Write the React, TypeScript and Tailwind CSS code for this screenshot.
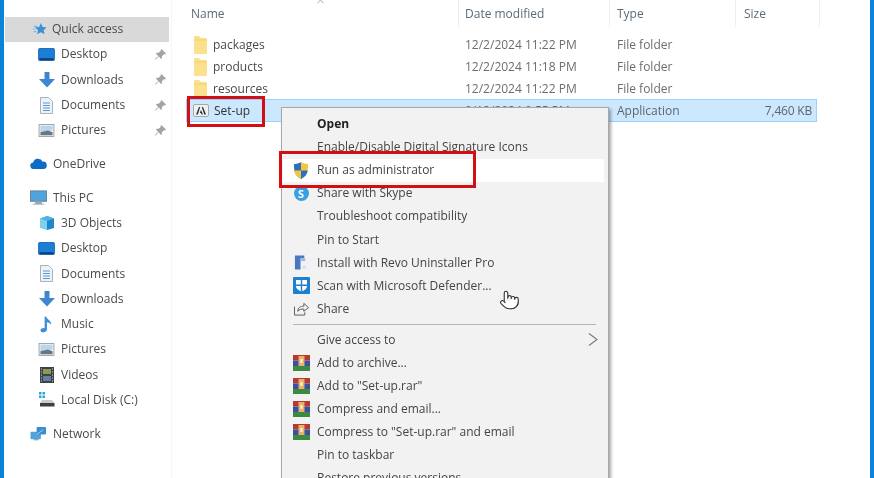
import { ChevronUp, Pointer } from 'lucide-react';
import type { ReactNode } from 'react';

function StarIcon() {
  return (
    <svg viewBox="0 0 16 16" className="w-[14px] h-[14px]">
      <path d="M9 1l2 4.600 4.600.5-3.400 3.200 1 4.700L9 11.600 4.800 14l1-4.700L2.400 6.100 7 5.600z" fill="#3f8fd8" />
      <path d="M1 5h4M0 8h3M1 11h3" stroke="#7ab6e8" strokeWidth="1.200" />
    </svg>
  );
}

function DesktopIcon() {
  return (
    <svg viewBox="0 0 18 14" className="w-[17px] h-[13px]">
      <rect x="0.500" y="0.500" width="17" height="13" rx="1" fill="#1b7fd8" stroke="#1565b0" />
      <rect x="1.500" y="11" width="15" height="2" fill="#0d3f78" />
    </svg>
  );
}

function DownloadIcon() {
  return (
    <svg viewBox="0 0 16 16" className="w-[16px] h-[16px]">
      <path d="M5.500 0h5v7H16l-8 8.500L0 7h5.500z" fill="#3c87cf" />
    </svg>
  );
}

function DocumentIcon() {
  return (
    <svg viewBox="0 0 13 17" className="w-[13px] h-[17px]">
      <path d="M.5.500h8l4 4v12H.5z" fill="#eef3f8" stroke="#a9b3bd" />
      <path d="M3 6h7M3 8.500h7M3 11h7M3 13.500h7" stroke="#5d9bd2" />
    </svg>
  );
}

function PicturesIcon() {
  return (
    <svg viewBox="0 0 17 14" className="w-[17px] h-[13px]">
      <rect x="0.500" y="0.500" width="16" height="13" fill="#eef1f4" stroke="#9aa3ab" />
      <path d="M2 2h13v5L2 9z" fill="#b9d6ee" />
      <path d="M2 9l8-2 5 2v3H2z" fill="#6b7780" />
    </svg>
  );
}

function CloudIcon() {
  return (
    <svg viewBox="0 0 18 12" className="w-[17px] h-[11px]">
      <path d="M4 12a3.500 3.500 0 0 1-.8-7A5.500 5.500 0 0 1 13.500 4 4 4 0 0 1 14.500 12z" fill="#0f6cc4" />
    </svg>
  );
}

function MonitorIcon() {
  return (
    <svg viewBox="0 0 18 16" className="w-[17px] h-[16px]">
      <rect x="0.500" y="0.500" width="17" height="11" fill="#4fa3de" stroke="#6d8293" />
      <path d="M6 12h6v2H6zM3 14.500h12" fill="#9aa6ae" stroke="#9aa6ae" />
    </svg>
  );
}

function CubeIcon() {
  return (
    <svg viewBox="0 0 16 16" className="w-[16px] h-[16px]">
      <path d="M8 1l7 2.500v9.500L8 15z" fill="#1f87c9" />
      <path d="M8 1L1 3.500v9.500L8 15z" fill="#7fd0ee" />
      <path d="M1 3.500L8 1l7 2.500L8 6z" fill="#4db3e3" />
    </svg>
  );
}

function MusicIcon() {
  return (
    <svg viewBox="0 0 14 17" className="w-[13px] h-[17px]">
      <path d="M5 0h1.500c.5 3 6 4 5.500 9-1-2-3-3-4.500-3v8c0 2-2 3-4 3s-3-1-3-2.200C.5 13 3 12 5 12.500z" fill="#3c8fd8" />
    </svg>
  );
}

function VideosIcon() {
  return (
    <svg viewBox="0 0 14 16" className="w-[14px] h-[16px]">
      <rect width="14" height="16" fill="#3d4248" />
      <rect x="3" y="2" width="8" height="5" fill="#8c9a52" />
      <rect x="3" y="9" width="8" height="5" fill="#62809c" />
      <path d="M1 2h1M1 5h1M1 8h1M1 11h1M1 14h1M12 2h1M12 5h1M12 8h1M12 11h1M12 14h1" stroke="#d0d4d8" />
    </svg>
  );
}

function DiskIcon() {
  return (
    <svg viewBox="0 0 16 15" className="w-[16px] h-[15px]">
      <rect x="0" y="0" width="2.500" height="2.500" fill="#29a5df" />
      <rect x="3.500" y="0" width="2.500" height="2.500" fill="#29a5df" />
      <rect x="0" y="3.500" width="2.500" height="2.500" fill="#29a5df" />
      <rect x="3.500" y="3.500" width="2.500" height="2.500" fill="#29a5df" />
      <path d="M3 8h10l2.500 3H1z" fill="#c8ccd0" />
      <rect x="1" y="11" width="14.500" height="3.500" fill="#3c4045" />
    </svg>
  );
}

function NetworkIcon() {
  return (
    <svg viewBox="0 0 18 17" className="w-[17px] h-[16px]">
      <rect x="0.500" y="6" width="11" height="8" rx="1" fill="#4fa3de" />
      <path d="M4 14.500h5" stroke="#9aa6ae" strokeWidth="1.500" />
      <rect x="7" y="1" width="10" height="8" rx="1" fill="#3d8ccf" />
      <path d="M7 9l7-5" stroke="#a9d4f0" />
    </svg>
  );
}

function PinIcon() {
  return (
    <svg viewBox="0 0 12 12" className="w-[11px] h-[11px]">
      <path d="M7 0l5 5-1 1-1-.5L7.500 8 7.500 10 6.500 11 4 8 .8 11.500 0 11l3.500-3.500L1 5l1-1 2 0 2.500-2.500L6 1z" fill="#a3a3a3" />
    </svg>
  );
}

function FolderIcon() {
  return (
    <svg viewBox="0 0 13 18" className="w-[13px] h-[18px] shrink-0">
      <path d="M1 0h4l2 2h5a1 1 0 0 1 1 1v14a1 1 0 0 1-1 1H1a1 1 0 0 1-1-1V1a1 1 0 0 1 1-1z" fill="#fbe08e" />
      <path d="M0 4h13" stroke="#f6cf68" />
    </svg>
  );
}

function AdobeIcon() {
  return (
    <svg viewBox="0 0 16 13" className="w-[16px] h-[13px] shrink-0">
      <rect x="0.500" y="0.500" width="15" height="12" rx="1.500" fill="#eef0f2" stroke="#a5a8ab" />
      <path d="M3 10.500L6 3h1.200L4.800 10.500zM13 10.500L10 3H8.800l2.400 7.500zM8 6l2 4.500H8.600L8 9H6.800z" fill="#2c2c2c" />
    </svg>
  );
}

function ShieldIcon() {
  return (
    <svg viewBox="0 0 16 17" className="w-[16px] h-[17px]">
      <path d="M8 0C6 1.500 3 2 1 2c0 6 0 11 7 15z" fill="#2f6fb5" />
      <path d="M8 0c2 1.500 5 2 7 2 0 6 0 11-7 15z" fill="#f3c544" />
      <path d="M1.300 8.500H8V17C3.500 14.500 1.800 12 1.300 8.500z" fill="#f3c544" />
      <path d="M14.700 8.500H8V17c4.500-2.500 6.200-5 6.700-8.500z" fill="#2f6fb5" />
    </svg>
  );
}

function SkypeIcon() {
  return (
    <div className="w-[15px] h-[15px] rounded-full bg-[#3aa0e4] flex items-center justify-center text-white text-[11px] font-bold leading-none">
      S
    </div>
  );
}

function RevoIcon() {
  return (
    <svg viewBox="0 0 15 15" className="w-[14px] h-[15px]">
      <path d="M1 0h10v3H7v12H1z" fill="#4a78c0" />
      <path d="M7 3h5v3H7z" fill="#9db9e2" />
      <rect x="9" y="11" width="4" height="3" fill="#d5dfee" />
    </svg>
  );
}

function DefenderIcon() {
  return (
    <svg viewBox="0 0 17 17" className="w-[17px] h-[17px]">
      <rect width="17" height="17" rx="1" fill="#1f7fd0" />
      <path d="M3 3h11v6c0 3-3 4.500-5.500 5.500C6 13.500 3 12 3 9z" fill="#ffffff" />
      <path d="M7.800 3h1.400v11.500H7.800zM3 7.500h11v1.400H3z" fill="#1f7fd0" />
    </svg>
  );
}

function ShareIcon() {
  return (
    <svg viewBox="0 0 16 15" fill="none" stroke="#555555" strokeWidth="1" className="w-[15px] h-[14px]">
      <path d="M.5 5v9h11v-3" />
      <path d="M4 10c0-4 3-5.500 6.500-5.500V1.500L15.500 6l-5 4V7.500C8 7.500 5.500 8 4 10z" />
    </svg>
  );
}

function RarIcon() {
  return (
    <svg viewBox="0 0 17 16" className="w-[17px] h-[16px]">
      <rect width="17" height="5.500" fill="#b8392f" />
      <rect y="5.500" width="17" height="5.500" fill="#3d4fa5" />
      <rect y="11" width="17" height="5" fill="#3c8a3f" />
      <rect x="5.500" y="1" width="6" height="10" fill="#e8b26a" />
      <rect x="7.500" y="4" width="2" height="4" fill="#fff4dc" />
    </svg>
  );
}

function MenuArrow() {
  return (
    <svg viewBox="0 0 10 13" fill="none" stroke="#777777" strokeWidth="1.100" className="w-[10px] h-[13px] mr-[6px]">
      <path d="M1 .5L9 6.500 1 12.500" />
    </svg>
  );
}

type NavItem = { label: string; icon: ReactNode; pin?: boolean };

const quickAccess: NavItem[] = [
  { label: 'Desktop', icon: <DesktopIcon />, pin: true },
  { label: 'Downloads', icon: <DownloadIcon />, pin: true },
  { label: 'Documents', icon: <DocumentIcon />, pin: true },
  { label: 'Pictures', icon: <PicturesIcon />, pin: true },
];

const thisPc: NavItem[] = [
  { label: '3D Objects', icon: <CubeIcon /> },
  { label: 'Desktop', icon: <DesktopIcon /> },
  { label: 'Documents', icon: <DocumentIcon /> },
  { label: 'Downloads', icon: <DownloadIcon /> },
  { label: 'Music', icon: <MusicIcon /> },
  { label: 'Pictures', icon: <PicturesIcon /> },
  { label: 'Videos', icon: <VideosIcon /> },
  { label: 'Local Disk (C:)', icon: <DiskIcon /> },
];

function NavRow({ item }: { item: NavItem }) {
  return (
    <div className="h-[25.3px] flex items-center pl-[32px] pr-[5px]">
      <span className="w-[25px] flex justify-center pr-[5px] pl-[1px]">{item.icon}</span>
      <span className="flex-1">{item.label}</span>
      {item.pin && <PinIcon />}
    </div>
  );
}

function TopRow({ icon, label }: { icon: ReactNode; label: string }) {
  return (
    <div className="h-[25.3px] flex items-center pl-[26px]">
      <span className="w-[23px] flex justify-start">{icon}</span>
      <span>{label}</span>
    </div>
  );
}

const menuTop: { label: string; icon?: ReactNode; bold?: boolean; hot?: boolean }[] = [
  { label: 'Open', bold: true },
  { label: 'Enable/Disable Digital Signature Icons' },
  { label: 'Run as administrator', icon: <ShieldIcon />, hot: true },
  { label: 'Share with Skype', icon: <SkypeIcon /> },
  { label: 'Troubleshoot compatibility' },
  { label: 'Pin to Start' },
  { label: 'Install with Revo Uninstaller Pro', icon: <RevoIcon /> },
  { label: 'Scan with Microsoft Defender...', icon: <DefenderIcon /> },
  { label: 'Share', icon: <ShareIcon /> },
];

const menuBottom: { label: string; icon?: ReactNode; arrow?: boolean }[] = [
  { label: 'Give access to', arrow: true },
  { label: 'Add to archive...', icon: <RarIcon /> },
  { label: 'Add to "Set-up.rar"', icon: <RarIcon /> },
  { label: 'Compress and email...', icon: <RarIcon /> },
  { label: 'Compress to "Set-up.rar" and email', icon: <RarIcon /> },
  { label: 'Pin to taskbar' },
  { label: 'Restore previous versions' },
];

const folders = [
  { name: 'packages', date: '12/2/2024 11:22 PM' },
  { name: 'products', date: '12/2/2024 11:18 PM' },
  { name: 'resources', date: '12/2/2024 11:22 PM' },
];

export default function App() {
  return (
    <div className="relative w-[874px] h-[478px] overflow-hidden bg-white flex text-[12px] text-[#4a4a4a] font-['Open_Sans','Noto_Sans',sans-serif] blur-[0.4px]">
      <div className="w-[4px] bg-[#0a84d8] shrink-0" />

      {/* Nav pane */}
      <div className="w-[168px] shrink-0 pt-[17px] border-r border-[#f6f6f6]">
        <div className="h-[24.8px] bg-[#d9d9d9] flex items-center pl-[28px] ml-[1px] mr-[2px]">
          <span className="w-[19px]"><StarIcon /></span>
          <span>Quick access</span>
        </div>
        {quickAccess.map((item) => <NavRow key={item.label} item={item} />)}
        <div className="h-[8.2px]" />
        <TopRow icon={<CloudIcon />} label="OneDrive" />
        <div className="h-[8.5px]" />
        <TopRow icon={<MonitorIcon />} label="This PC" />
        {thisPc.map((item) => <NavRow key={item.label} item={item} />)}
        <div className="h-[8.5px]" />
        <TopRow icon={<NetworkIcon />} label="Network" />
      </div>

      {/* File list */}
      <div className="flex-1 relative pl-[14px]">
        <div className="h-[27px] flex items-center text-[#5c6b7a]">
          <div className="w-[273px] pl-[5px] h-full flex items-center border-r border-[#eeeeee] relative">
            Name
            <ChevronUp className="absolute left-[129px] top-[-4px] w-[11px] h-[11px] text-[#9a9a9a]" />
          </div>
          <div className="w-[151px] pl-[6px] h-full flex items-center border-r border-[#eeeeee]">Date modified</div>
          <div className="w-[126px] pl-[7px] h-full flex items-center border-r border-[#eeeeee]">Type</div>
          <div className="w-[84px] pl-[8px] h-full flex items-center border-r border-[#eeeeee]">Size</div>
        </div>
        <div className="pt-[6.5px]">
          {folders.map((f) => (
            <div key={f.name} className="h-[22px] flex items-center">
              <div className="w-[273px] flex items-center pl-[8px] gap-[6px]"><FolderIcon />{f.name}</div>
              <div className="w-[152px] pl-[6px] text-[#6d6d6d]">{f.date}</div>
              <div className="w-[126px] pl-[6px] text-[#6d6d6d]">File folder</div>
            </div>
          ))}
          <div className="h-[23px] w-[631px] -mt-[0.5px] flex items-center bg-[#cce8ff] border border-[#99d1ff]">
            <div className="w-[272px] flex items-center pl-[6px] gap-[5px] text-[#333333]"><AdobeIcon />Set-up</div>
            <div className="w-[152px] pl-[6px] text-[#6d6d6d]">9/12/2024 9:55 PM</div>
            <div className="w-[126px] pl-[6px] text-[#5d6670]">Application</div>
            <div className="w-[75px] text-right text-[#5d6670] tracking-[-0.2px]">7,460 KB</div>
          </div>
        </div>
      </div>

      <div className="w-[4px] bg-[#0a84d8] shrink-0 absolute right-0 top-0 bottom-0" />

      {/* Context menu */}
      <div className="absolute left-[281px] top-[107px] w-[328px] h-[380px] bg-[#f2f2f2] border border-[#a8a8a8] shadow-[2px_2px_3px_rgba(0,0,0,0.35)] pt-[4.5px] pl-[1px] text-[#444444]">
        {menuTop.map((m) => (
          <div
            key={m.label}
            className={`h-[23.1px] w-[321px] flex items-center ${m.hot ? 'bg-white' : ''} ${m.bold ? 'font-bold text-[#222222]' : ''}`}
          >
            <span className="w-[34px] flex justify-center pl-[2px] shrink-0">{m.icon}</span>
            {m.label}
          </div>
        ))}
        <div className="h-[7.8px] flex items-center pl-[10px] pr-[12px]">
          <div className="h-px w-full bg-[#b5b5b5]" />
        </div>
        {menuBottom.map((m) => (
          <div key={m.label} className="h-[23.1px] w-[321px] flex items-center">
            <span className="w-[34px] flex justify-center pl-[2px] shrink-0">{m.icon}</span>
            <span className="flex-1">{m.label}</span>
            {m.arrow && <MenuArrow />}
          </div>
        ))}
      </div>

      {/* Red annotations and pointer */}
      <div className="absolute left-[187px] top-[96px] w-[78px] h-[31px] border-[3px] border-[#d40f14]" />
      <div className="absolute left-[279px] top-[151px] w-[197px] h-[37px] border-[3px] border-[#d40f14]" />
      <Pointer className="absolute left-[499px] top-[287px] w-[21px] h-[26px] text-[#333333]" fill="#ffffff" strokeWidth={1.25} />
    </div>
  );
}
